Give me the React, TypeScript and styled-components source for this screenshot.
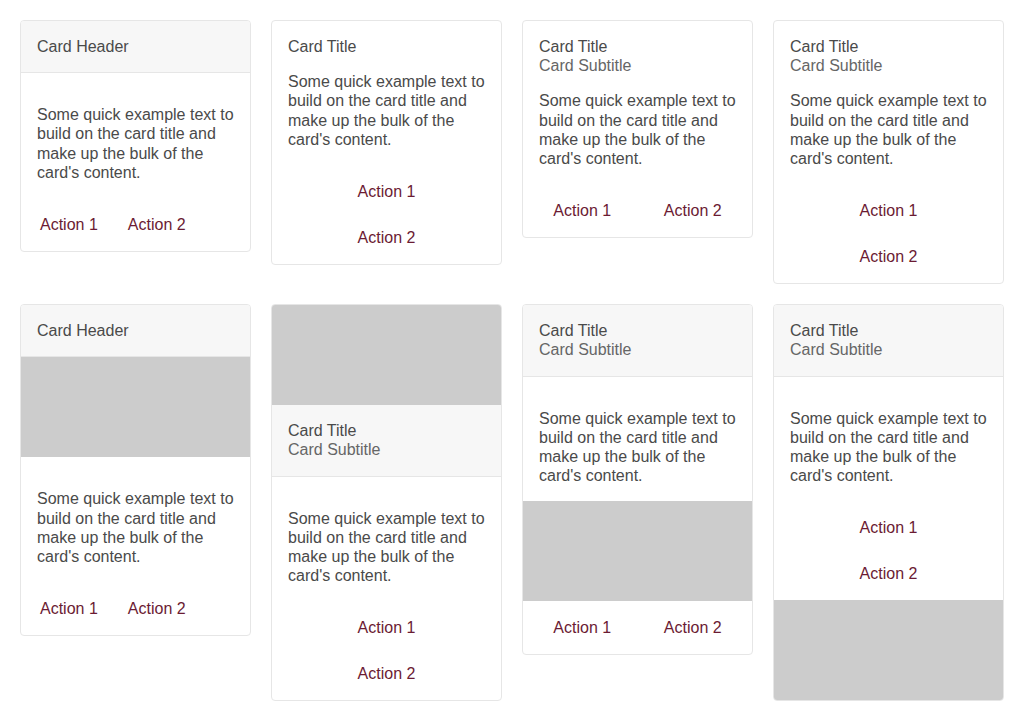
import React from "react";
import styled, { createGlobalStyle } from "styled-components";

const Global = createGlobalStyle`
  html, body { margin: 0; padding: 0; background: #ffffff; }
  body { font-family: "Liberation Sans", Arial, sans-serif; font-size: 16px; color: #4a4a4a; }
  * { box-sizing: border-box; }
`;

const Page = styled.div`
  padding: 20px;
  display: flex;
  flex-direction: column;
  gap: 20px;
`;

const Row = styled.div`
  display: grid;
  grid-template-columns: repeat(4, 231px);
  gap: 20px;
  align-items: start;
`;

const Card = styled.div`
  border: 1px solid #e6e6e6;
  border-radius: 4px;
  overflow: hidden;
  background: #fff;
  display: flex;
  flex-direction: column;
`;

const Header = styled.div`
  background: #f7f7f7;
  border-bottom: 1px solid #e6e6e6;
  padding: 16px;
  line-height: 19.2px;
`;

const Body = styled.div`
  padding: 16px;
  line-height: 19.2px;
`;

const Title = styled.div`
  color: #4a4a4a;
`;

const Subtitle = styled.div`
  color: #666666;
`;

const Text = styled.p`
  margin: 16px 0 0;
  color: #4a4a4a;
`;

const Media = styled.div`
  height: 100px;
  background: #cccccc;
`;

const Actions = styled.div<{ $stacked?: boolean; $full?: boolean }>`
  padding: 9px 8px 8px;
  display: flex;
  flex-direction: ${(p) => (p.$stacked ? "column" : "row")};
  gap: ${(p) => (p.$stacked ? "10px" : "8px")};
  & > * {
    flex: ${(p) => (p.$full && !p.$stacked ? "1 1 0" : "0 0 auto")};
  }
`;

const Action = styled.a`
  display: block;
  padding: 8px 11px;
  line-height: 20px;
  text-align: center;
  color: #6b1b33;
  text-decoration: none;
  cursor: pointer;
`;

const TEXT = "Some quick example text to build on the card title and make up the bulk of the card's content.";

const TwoActions = ({ stacked, full }: { stacked?: boolean; full?: boolean }) => (
  <Actions $stacked={stacked} $full={full}>
    <Action>Action 1</Action>
    <Action>Action 2</Action>
  </Actions>
);

const TitleBlock = ({ sub }: { sub?: boolean }) => (
  <>
    <Title>Card Title</Title>
    {sub && <Subtitle>Card Subtitle</Subtitle>}
  </>
);

export default function App() {
  return (
    <>
      <Global />
      <Page>
        <Row>
          <Card>
            <Header>Card Header</Header>
            <Body>
              <Text>{TEXT}</Text>
            </Body>
            <TwoActions />
          </Card>
          <Card>
            <Body>
              <TitleBlock />
              <Text>{TEXT}</Text>
            </Body>
            <TwoActions stacked />
          </Card>
          <Card>
            <Body>
              <TitleBlock sub />
              <Text>{TEXT}</Text>
            </Body>
            <TwoActions full />
          </Card>
          <Card>
            <Body>
              <TitleBlock sub />
              <Text>{TEXT}</Text>
            </Body>
            <TwoActions stacked />
          </Card>
        </Row>
        <Row>
          <Card>
            <Header>Card Header</Header>
            <Media />
            <Body>
              <Text>{TEXT}</Text>
            </Body>
            <TwoActions />
          </Card>
          <Card>
            <Media />
            <Header>
              <TitleBlock sub />
            </Header>
            <Body>
              <Text>{TEXT}</Text>
            </Body>
            <TwoActions stacked />
          </Card>
          <Card>
            <Header>
              <TitleBlock sub />
            </Header>
            <Body>
              <Text>{TEXT}</Text>
            </Body>
            <Media />
            <TwoActions full />
          </Card>
          <Card>
            <Header>
              <TitleBlock sub />
            </Header>
            <Body>
              <Text>{TEXT}</Text>
            </Body>
            <TwoActions stacked />
            <Media />
          </Card>
        </Row>
      </Page>
    </>
  );
}
